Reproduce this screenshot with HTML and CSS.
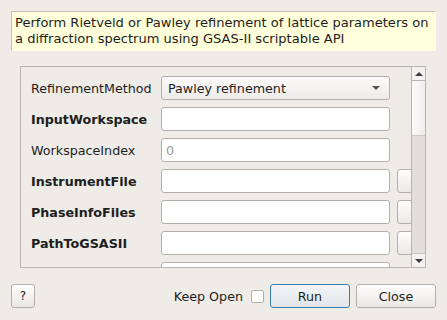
FILE: index.html
```html
<!DOCTYPE html>
<html lang="en">
<head>
    <meta charset="UTF-8">
    <title>PawleyRefinement</title>
    <link rel="stylesheet" href="styles.css">
</head>
<body>
    <div class="dialog">
        <div class="description">
            Perform Rietveld or Pawley refinement of lattice parameters on<br>
            a diffraction spectrum using GSAS-II scriptable API
        </div>

        <div class="scroll-area">
            <div class="viewport">
                <div class="props">
                    <label class="prop-label">RefinementMethod</label>
                    <div class="combo">
                        <span>Pawley refinement</span>
                        <span class="combo-arrow"></span>
                    </div>
                    <span></span>

                    <label class="prop-label required">InputWorkspace</label>
                    <div class="field"></div>
                    <span></span>

                    <label class="prop-label">WorkspaceIndex</label>
                    <div class="field placeholder">0</div>
                    <span></span>

                    <label class="prop-label required">InstrumentFile</label>
                    <div class="field"></div>
                    <button class="browse"></button>

                    <label class="prop-label required">PhaseInfoFiles</label>
                    <div class="field"></div>
                    <button class="browse"></button>

                    <label class="prop-label required">PathToGSASII</label>
                    <div class="field"></div>
                    <button class="browse"></button>

                    <label class="prop-label"></label>
                    <div class="field"></div>
                    <span></span>
                </div>
            </div>
            <div class="scrollbar">
                <div class="sb-btn sb-up"><span class="arrow-up"></span></div>
                <div class="sb-handle"></div>
                <div class="sb-track"></div>
                <div class="sb-btn sb-down"><span class="arrow-down"></span></div>
            </div>
        </div>

        <div class="footer">
            <button class="btn help">?</button>
            <div class="spacer"></div>
            <label class="keep-open">Keep Open <span class="checkbox"></span></label>
            <button class="btn run">Run</button>
            <button class="btn close">Close</button>
        </div>
    </div>
</body>
</html>
```

FILE: styles.css
```css
* {
    margin: 0;
    padding: 0;
    box-sizing: border-box;
}

body {
    font-family: "DejaVu Sans", sans-serif;
    font-size: 12.7px;
    color: #1e1e1e;
    background: #efebe7;
    width: 447px;
    height: 320px;
    overflow: hidden;
}

.dialog {
    display: flex;
    flex-direction: column;
    padding: 11px 11px 0 11px;
}

.description {
    height: 40px;
    background: #ffffdc;
    border-top: 1px solid #c4c1b4;
    border-left: 1px solid #c4c1b4;
    border-right: 1px solid #fbfbf2;
    border-bottom: 1px solid #fbfbf2;
    padding: 3px 0 0 3px;
    line-height: 16px;
    font-size: 13.05px;
    white-space: nowrap;
    overflow: hidden;
}

.scroll-area {
    display: flex;
    margin: 15px 10px 0 9px;
    height: 202px;
    border: 1px solid #b8b4b0;
}

.viewport {
    flex: 1;
    overflow: hidden;
}

.props {
    display: grid;
    grid-template-columns: 123px 229px 30px;
    grid-auto-rows: 24px;
    column-gap: 7px;
    row-gap: 7px;
    padding: 9px 0 0 10px;
    width: 420px;
}

.prop-label {
    display: flex;
    align-items: center;
    white-space: nowrap;
}

.prop-label.required {
    font-weight: bold;
}

.field {
    background: #ffffff;
    border: 1px solid #b3afab;
    border-radius: 3px;
    padding: 0 4px;
    display: flex;
    align-items: center;
}

.placeholder {
    color: #9a9896;
}

.combo {
    background: linear-gradient(#fbfaf9, #eeece9);
    border: 1px solid #b3afab;
    border-radius: 3px;
    padding: 0 6px;
    display: flex;
    align-items: center;
    justify-content: space-between;
}

.combo-arrow {
    width: 0;
    height: 0;
    border-left: 4px solid transparent;
    border-right: 4px solid transparent;
    border-top: 4px solid #555351;
    margin-right: 3px;
}

.browse {
    width: 30px;
    background: linear-gradient(#fdfdfc, #ebe9e6);
    border: 1px solid #b3afab;
    border-radius: 3px;
}

.scrollbar {
    width: 14px;
    display: flex;
    flex-direction: column;
    border-left: 1px solid #b8b4b0;
}

.sb-btn {
    height: 14px;
    display: flex;
    align-items: center;
    justify-content: center;
    background: #f4f2f0;
}

.sb-up {
    border-bottom: 1px solid #b8b4b0;
}

.sb-down {
    border-top: 1px solid #c8c4c0;
}

.arrow-up,
.arrow-down {
    width: 0;
    height: 0;
    border-left: 4px solid transparent;
    border-right: 4px solid transparent;
}

.arrow-up {
    border-bottom: 4px solid #3c3a38;
}

.arrow-down {
    border-top: 4px solid #3c3a38;
}

.sb-handle {
    height: 55px;
    background: linear-gradient(90deg, #fcfbfb, #efedeb);
    border-bottom: 1px solid #cfcbc7;
}

.sb-track {
    flex: 1;
    background: #e1dedb;
}

.footer {
    display: flex;
    align-items: center;
    margin-top: 16px;
    height: 24px;
}

.spacer {
    flex: 1;
}

.btn {
    height: 24px;
    font-family: "DejaVu Sans", sans-serif;
    font-size: 12.7px;
    color: #1e1e1e;
    background: linear-gradient(#fdfdfc, #eae8e5);
    border: 1px solid #b3afab;
    border-radius: 3px;
}

.help {
    width: 24px;
    font-size: 12px;
}

.keep-open {
    display: flex;
    align-items: center;
    gap: 8px;
    margin-right: 6px;
}

.checkbox {
    width: 13px;
    height: 13px;
    background: #ffffff;
    border: 1px solid #b3afab;
    border-radius: 2px;
}

.run {
    width: 80px;
    border-color: #3a7cae;
    background: linear-gradient(#f3f5f7, #e2e6ea);
    margin-right: 6px;
}

.close {
    width: 80px;
}
```
